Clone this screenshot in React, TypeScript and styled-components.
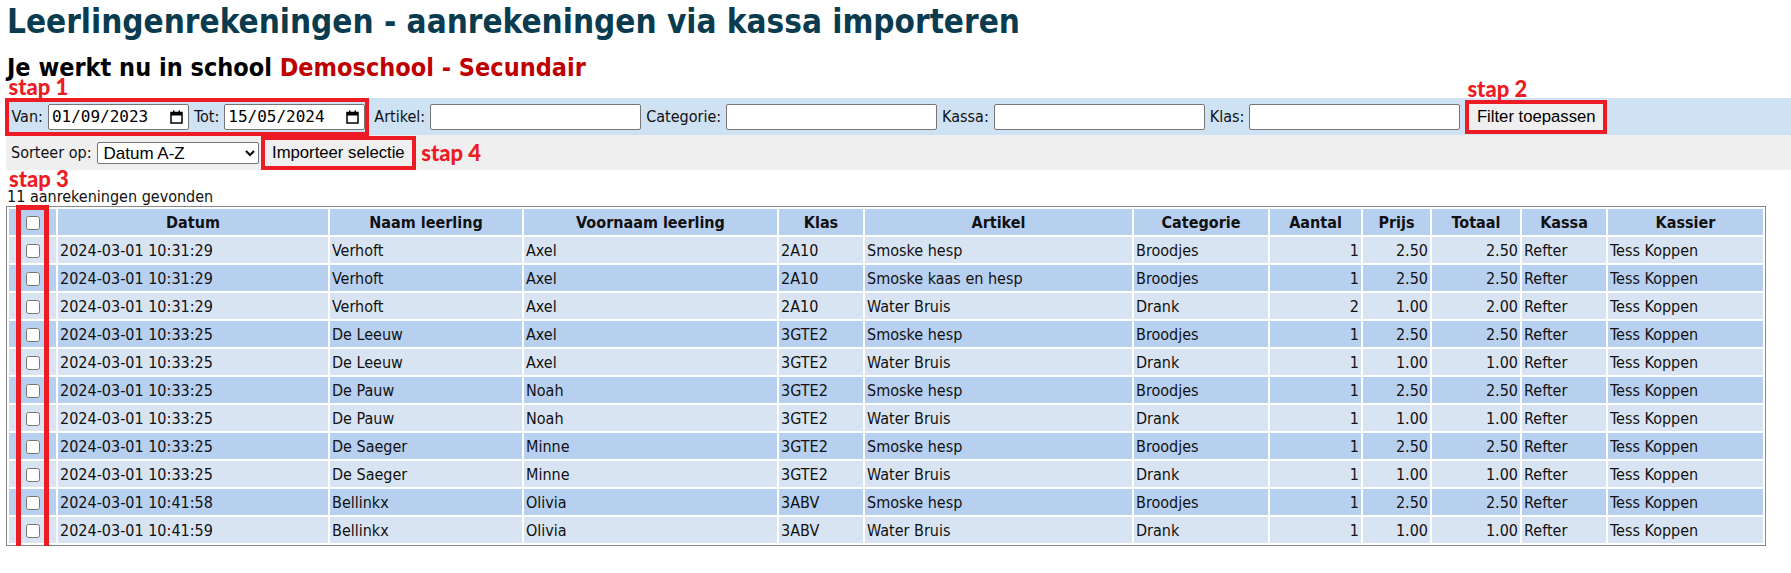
import { styled, createGlobalStyle } from "styled-components";

const GlobalStyle = createGlobalStyle`
  body {
    margin: 0;
    background: #fff;
    color: #000;
    font-family: "DejaVu Sans Condensed", "DejaVu Sans", sans-serif;
    font-stretch: condensed;
    font-size: 16px;
  }
`;

type Row = {
  datum: string;
  naam: string;
  voornaam: string;
  klas: string;
  artikel: string;
  categorie: string;
  aantal: number;
  prijs: string;
  totaal: string;
};

const rows: Row[] = [
  { datum: "2024-03-01 10:31:29", naam: "Verhoft", voornaam: "Axel", klas: "2A10", artikel: "Smoske hesp", categorie: "Broodjes", aantal: 1, prijs: "2.50", totaal: "2.50" },
  { datum: "2024-03-01 10:31:29", naam: "Verhoft", voornaam: "Axel", klas: "2A10", artikel: "Smoske kaas en hesp", categorie: "Broodjes", aantal: 1, prijs: "2.50", totaal: "2.50" },
  { datum: "2024-03-01 10:31:29", naam: "Verhoft", voornaam: "Axel", klas: "2A10", artikel: "Water Bruis", categorie: "Drank", aantal: 2, prijs: "1.00", totaal: "2.00" },
  { datum: "2024-03-01 10:33:25", naam: "De Leeuw", voornaam: "Axel", klas: "3GTE2", artikel: "Smoske hesp", categorie: "Broodjes", aantal: 1, prijs: "2.50", totaal: "2.50" },
  { datum: "2024-03-01 10:33:25", naam: "De Leeuw", voornaam: "Axel", klas: "3GTE2", artikel: "Water Bruis", categorie: "Drank", aantal: 1, prijs: "1.00", totaal: "1.00" },
  { datum: "2024-03-01 10:33:25", naam: "De Pauw", voornaam: "Noah", klas: "3GTE2", artikel: "Smoske hesp", categorie: "Broodjes", aantal: 1, prijs: "2.50", totaal: "2.50" },
  { datum: "2024-03-01 10:33:25", naam: "De Pauw", voornaam: "Noah", klas: "3GTE2", artikel: "Water Bruis", categorie: "Drank", aantal: 1, prijs: "1.00", totaal: "1.00" },
  { datum: "2024-03-01 10:33:25", naam: "De Saeger", voornaam: "Minne", klas: "3GTE2", artikel: "Smoske hesp", categorie: "Broodjes", aantal: 1, prijs: "2.50", totaal: "2.50" },
  { datum: "2024-03-01 10:33:25", naam: "De Saeger", voornaam: "Minne", klas: "3GTE2", artikel: "Water Bruis", categorie: "Drank", aantal: 1, prijs: "1.00", totaal: "1.00" },
  { datum: "2024-03-01 10:41:58", naam: "Bellinkx", voornaam: "Olivia", klas: "3ABV", artikel: "Smoske hesp", categorie: "Broodjes", aantal: 1, prijs: "2.50", totaal: "2.50" },
  { datum: "2024-03-01 10:41:59", naam: "Bellinkx", voornaam: "Olivia", klas: "3ABV", artikel: "Water Bruis", categorie: "Drank", aantal: 1, prijs: "1.00", totaal: "1.00" },
];

const colWidths = [47, 270, 192, 253, 84, 267, 134, 91, 67, 88, 84, 155];

const Page = styled.div`
  padding: 0 0 0 6px;
`;

const Title = styled.h1`
  margin: 2px 0 0 1px;
  font-size: 33px;
  line-height: 40px;
  font-weight: bold;
  color: #0a3b4f;
`;

const SchoolLine = styled.h2`
  margin: 10px 0 0 1px;
  font-size: 25px;
  line-height: 32px;
  font-weight: bold;
  color: #000;
`;

const SchoolName = styled.span`
  color: #c00000;
`;

const FilterBar = styled.div`
  display: flex;
  align-items: center;
  height: 37px;
  margin-top: 14px;
  background: #cfe2f3;
`;

const SortBar = styled.div`
  display: flex;
  align-items: center;
  height: 35px;
  background: #efefef;
`;

// rode kaders uit de handleiding
const Marked = styled.span<{ $full?: boolean; $gap?: number }>`
  position: relative;
  display: inline-flex;
  align-items: center;
  box-sizing: border-box;
  border: 4px solid #ed1c24;
  height: ${(p) => (p.$full ? "38px" : "auto")};
  margin-left: ${(p) => (p.$full ? "-1.5px" : `${p.$gap ?? 0}px`)};
`;

const Step = styled.span<{ $side: "top" | "right"; $x?: number; $y?: number }>`
  position: absolute;
  white-space: nowrap;
  font-family: Lato, "Open Sans", sans-serif;
  font-weight: 900;
  font-size: 22px;
  line-height: 22px;
  color: #ed1c24;
  ${(p) =>
    p.$side === "top"
      ? `bottom: calc(100% + ${p.$y ?? 4}px); left: ${p.$x ?? 0}px;`
      : `left: calc(100% + ${p.$x ?? 9}px); top: 50%; transform: translateY(-50%);`}
`;

const Label = styled.label<{ $first?: boolean }>`
  padding: 0 5px 0 ${(p) => (p.$first ? "3px" : "5px")};
  font-size: 16px;
  color: #111;
  white-space: nowrap;
`;

const TextInput = styled.input`
  box-sizing: border-box;
  width: 211px;
  height: 26px;
  margin: 0;
  border: 1px solid #767676;
  border-radius: 2px;
  background: #fff;
`;

const DateField = styled.span`
  box-sizing: border-box;
  display: inline-flex;
  align-items: center;
  justify-content: space-between;
  width: 141px;
  height: 26px;
  padding: 0 5px 0 3px;
  border: 1px solid #767676;
  border-radius: 2px;
  background: #fff;
  font-family: "DejaVu Sans Mono", "Liberation Mono", monospace;
  font-stretch: normal;
  font-size: 16px;
  color: #000;
`;

const Select = styled.select`
  box-sizing: border-box;
  width: 162px;
  height: 22px;
  margin: 0 2px 0 0;
  padding: 0 0 0 2px;
  border: 1px solid #767676;
  border-radius: 2px;
  background: #fff;
  font-family: "Liberation Sans", Arial, sans-serif;
  font-size: 17px;
  color: #000;
`;

const Button = styled.button`
  height: 26px;
  margin: 0;
  padding: 0 7.5px;
  border: none;
  background: #efefef;
  font-family: "Liberation Sans", Arial, sans-serif;
  font-size: 16.7px;
  color: #000;
`;

const Count = styled.div`
  padding: 17px 0 0 1px;
  font-size: 16px;
  line-height: 19px;
  color: #111;
`;

const TableWrap = styled.div`
  position: relative;
`;

const ColumnMark = styled.div`
  position: absolute;
  left: 10px;
  top: -1px;
  width: 33px;
  height: 346px;
  box-sizing: border-box;
  border: 5px solid #ed1c24;
  pointer-events: none;
`;

const Table = styled.table`
  table-layout: fixed;
  width: 1760px;
  border: 1px solid #888;
  border-spacing: 2px;
`;

const Th = styled.th`
  height: 26px;
  padding: 0 2px;
  background: #b8d0f0;
  font-size: 16px;
  font-weight: bold;
  text-align: center;
  color: #111;
`;

const Tr = styled.tr<{ $shade: boolean }>`
  background: ${(p) => (p.$shade ? "#b8d0f0" : "#d9e4f3")};
`;

const Td = styled.td<{ $right?: boolean; $center?: boolean }>`
  height: 26px;
  padding: 0 2px;
  font-size: 16px;
  color: #111;
  white-space: nowrap;
  overflow: hidden;
  text-align: ${(p) => (p.$right ? "right" : p.$center ? "center" : "left")};
`;

const Check = styled.input.attrs({ type: "checkbox" })`
  width: 14px;
  height: 14px;
  margin: 0;
  vertical-align: middle;
`;

const CalendarIcon = () => (
  <svg width="13" height="14" viewBox="0 0 13 14">
    <rect x="1" y="2.5" width="11" height="10.5" fill="none" stroke="#000" strokeWidth="1.5" />
    <rect x="1" y="2.5" width="11" height="3" fill="#000" />
    <rect x="3" y="0.5" width="1.5" height="3" fill="#000" />
    <rect x="8.5" y="0.5" width="1.5" height="3" fill="#000" />
  </svg>
);

const DateInput = ({ value }: { value: string }) => (
  <DateField>
    <span>{value}</span>
    <CalendarIcon />
  </DateField>
);

const headers = [
  "Datum",
  "Naam leerling",
  "Voornaam leerling",
  "Klas",
  "Artikel",
  "Categorie",
  "Aantal",
  "Prijs",
  "Totaal",
  "Kassa",
  "Kassier",
];

function App() {
  return (
    <>
      <GlobalStyle />
      <Page>
        <Title>Leerlingenrekeningen - aanrekeningen via kassa importeren</Title>
        <SchoolLine>
          Je werkt nu in school <SchoolName>Demoschool - Secundair</SchoolName>
        </SchoolLine>

        <FilterBar>
          <Marked $full>
            <Step $side="top">stap 1</Step>
            <Label $first>Van:</Label>
            <DateInput value="01/09/2023" />
            <Label>Tot:</Label>
            <DateInput value="15/05/2024" />
          </Marked>
          <Label>Artikel:</Label>
          <TextInput type="text" />
          <Label>Categorie:</Label>
          <TextInput type="text" />
          <Label>Kassa:</Label>
          <TextInput type="text" />
          <Label>Klas:</Label>
          <TextInput type="text" />
          <Marked $gap={5}>
            <Step $side="top" $x={-2}>stap 2</Step>
            <Button>Filter toepassen</Button>
          </Marked>
        </FilterBar>

        <SortBar>
          <Label>Sorteer op:</Label>
          <Select defaultValue="datum-az">
            <option value="datum-az">Datum A-Z</option>
            <option value="datum-za">Datum Z-A</option>
            <option value="naam">Naam leerling</option>
          </Select>
          <Marked>
            <Step $side="right">stap 4</Step>
            <Button>Importeer selectie</Button>
          </Marked>
        </SortBar>

        <Count>11 aanrekeningen gevonden</Count>

        <TableWrap>
          <ColumnMark>
            <Step $side="top" $x={-12} $y={20}>stap 3</Step>
          </ColumnMark>
          <Table>
            <colgroup>
              {colWidths.map((w, i) => (
                <col key={i} style={{ width: w }} />
              ))}
            </colgroup>
            <thead>
              <tr>
                <Th>
                  <Check />
                </Th>
                {headers.map((h) => (
                  <Th key={h}>{h}</Th>
                ))}
              </tr>
            </thead>
            <tbody>
              {rows.map((r, i) => (
                <Tr key={i} $shade={i % 2 === 1}>
                  <Td $center>
                    <Check />
                  </Td>
                  <Td>{r.datum}</Td>
                  <Td>{r.naam}</Td>
                  <Td>{r.voornaam}</Td>
                  <Td>{r.klas}</Td>
                  <Td>{r.artikel}</Td>
                  <Td>{r.categorie}</Td>
                  <Td $right>{r.aantal}</Td>
                  <Td $right>{r.prijs}</Td>
                  <Td $right>{r.totaal}</Td>
                  <Td>Refter</Td>
                  <Td>Tess Koppen</Td>
                </Tr>
              ))}
            </tbody>
          </Table>
        </TableWrap>
      </Page>
    </>
  );
}

export default App;
